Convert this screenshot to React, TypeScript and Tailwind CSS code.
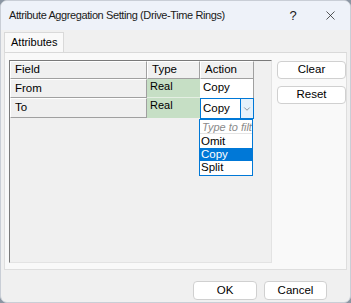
import { X, ChevronDown } from "lucide-react";

const font = { fontFamily: '"Liberation Sans", Arial, sans-serif' };

function HeadCell({ w, children }: { w: string; children?: React.ReactNode }) {
  return (
    <div
      className={`${w} h-full bg-[#f0f0f0] border-r border-b border-[#a0a0a0] border-t border-l border-t-white border-l-white pl-[4px] flex items-center text-[11.5px] text-black`}
    >
      {children}
    </div>
  );
}

export default function App() {
  return (
    <div className="w-[351px] h-[303px] bg-[#8b96a3]" style={font}>
      <div className="w-full h-full rounded-[7px] overflow-hidden border border-[#c9ced6] bg-[#f0f0f0] flex flex-col">
        {/* Title bar */}
        <div className="h-[29px] shrink-0 bg-[#eef2f9] flex items-center pl-[8px] text-[11px] text-[#1a1a1a]">
          <span className="flex-1 tracking-[-0.4px]">Attribute Aggregation Setting (Drive-Time Rings)</span>
          <span className="w-[20px] text-center text-[13px] mr-[20px]">?</span>
          <X size={15} strokeWidth={1.2} className="mr-[12px] text-[#222]" />
        </div>

        {/* Tabs */}
        <div className="h-[22px] shrink-0 flex items-end pl-[3px]">
          <div className="h-[20px] px-[6px] bg-[#f9f9f9] border border-b-0 border-[#d9d9d9] text-[11px] flex items-center">
            Attributes
          </div>
        </div>

        {/* Tab panel */}
        <div className="mx-[3px] h-[218px] shrink-0 bg-[#f9f9f9] border border-[#dedede] border-t-[#d9d9d9] flex gap-[5px] pl-[4px] pt-[7px] pb-[6px]">
          {/* Grid */}
          <div className="relative w-[264px] h-full bg-[#f0f0f0] border-t border-l border-[#7a7a7a] border-r border-b border-r-[#e3e3e3] border-b-[#e3e3e3]">
            <div className="flex h-[18px]">
              <HeadCell w="w-[137px]">Field</HeadCell>
              <HeadCell w="w-[53px]">Type</HeadCell>
              <HeadCell w="w-[54px]">Action</HeadCell>
            </div>
            <div className="flex h-[19px]">
              <HeadCell w="w-[137px]">From</HeadCell>
              <div className="w-[53px] h-full bg-[#c6dfc5] border-b border-[#e4efe3] pl-[3px] text-[11px] leading-[15px]">Real</div>
              <div className="w-[54px] h-full bg-white border-r border-[#a0a0a0] pl-[3px] text-[11.5px] leading-[16px]">Copy</div>
            </div>
            <div className="flex h-[20px]">
              <HeadCell w="w-[137px]">To</HeadCell>
              <div className="w-[53px] h-full bg-[#c6dfc5] pl-[3px] text-[11px] leading-[15px]">Real</div>
              <div className="w-[54px] h-[21px] bg-white border border-[#0078d7] flex">
                <div className="flex-1 pl-[2px] text-[11.5px] flex items-center">Copy</div>
                <div className="w-[13px] h-full border-l border-[#0078d7] bg-[#e5f1fb] flex items-center justify-center">
                  <ChevronDown size={10} strokeWidth={1.3} className="text-[#444]" />
                </div>
              </div>
            </div>

            {/* Dropdown list */}
            <div className="absolute left-[189px] top-[58px] w-[54px] h-[57px] bg-white border border-[#0078d7] overflow-hidden text-[11.5px]">
              <div className="h-[14px] leading-[14px] pl-[2px] italic text-[#8a8a8a] whitespace-nowrap text-[11px] border-b border-[#e4e4e4]">Type to filte</div>
              <div className="h-[14px] leading-[14px] pl-[1px]">Omit</div>
              <div className="h-[13px] leading-[13px] pl-[1px] bg-[#0078d7] text-white">Copy</div>
              <div className="h-[13px] leading-[13px] pl-[1px]">Split</div>
            </div>
          </div>

          {/* Side buttons */}
          <div className="flex flex-col gap-[7px] pt-[1px]">
            <button className="w-[69px] h-[18px] bg-white rounded-[4px] border border-[#d0d0d0] text-[11.5px] leading-none">
              Clear
            </button>
            <button className="w-[69px] h-[18px] bg-white rounded-[4px] border border-[#d0d0d0] text-[11.5px] leading-none">
              Reset
            </button>
          </div>
        </div>

        {/* Footer */}
        <div className="flex-1 flex items-end justify-end gap-[7px] pr-[23px] pb-[2px]">
          <button className="w-[64px] h-[19px] bg-white rounded-[4px] border border-[#d0d0d0] text-[11.5px] leading-none">
            OK
          </button>
          <button className="w-[63px] h-[19px] bg-white rounded-[4px] border border-[#d0d0d0] text-[11.5px] leading-none">
            Cancel
          </button>
        </div>
      </div>
    </div>
  );
}
